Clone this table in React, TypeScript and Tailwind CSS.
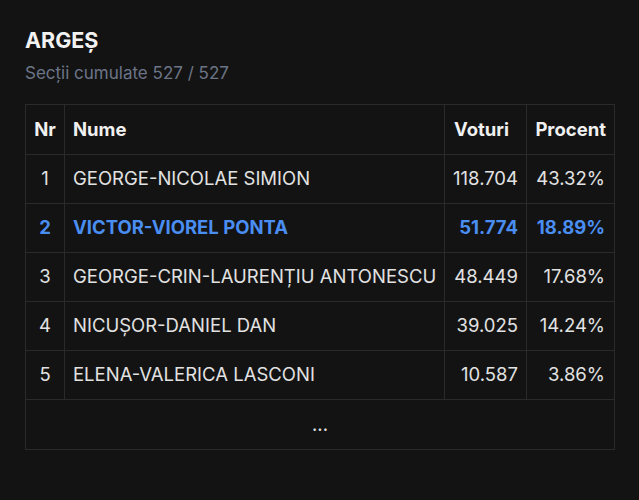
const rows = [
  { nr: 1, name: "GEORGE-NICOLAE SIMION", votes: "118.704", pct: "43.32%" },
  { nr: 2, name: "VICTOR-VIOREL PONTA", votes: "51.774", pct: "18.89%", hl: true },
  { nr: 3, name: "GEORGE-CRIN-LAURENȚIU ANTONESCU", votes: "48.449", pct: "17.68%" },
  { nr: 4, name: "NICUȘOR-DANIEL DAN", votes: "39.025", pct: "14.24%" },
  { nr: 5, name: "ELENA-VALERICA LASCONI", votes: "10.587", pct: "3.86%" },
];

export default function App() {
  return (
    <div
      className="w-[639px] h-[500px] bg-[#131313] px-[25px] pt-[26px]"
      style={{ fontFamily: "Inter, 'Liberation Sans', sans-serif" }}
    >
      <h1 className="text-[21.5px] font-bold text-[#f2f2f2] leading-[28px]">ARGEȘ</h1>
      <p className="text-[17px] text-[#6c7587] mt-[8px] leading-[22px]">Secții cumulate 527 / 527</p>
      <table className="mt-[20px] w-[590px] border-collapse border border-[#2a2a2a] text-[18.5px] text-[#e2e2e2]">
        <thead>
          <tr className="h-[50px] text-[#f0f0f0]">
            <th className="w-[39px] border border-[#2a2a2a] text-center font-bold">Nr</th>
            <th className="border border-[#2a2a2a] text-left pl-[8px] font-bold">Nume</th>
            <th className="w-[82px] border border-[#2a2a2a] text-right pr-[17px] font-bold">Voturi</th>
            <th className="w-[88px] border border-[#2a2a2a] text-right pr-[8px] font-bold">Procent</th>
          </tr>
        </thead>
        <tbody>
          {rows.map((r) => (
            <tr
              key={r.nr}
              className={r.hl ? "h-[49px] text-[#4a8ef2] font-bold" : "h-[49px]"}
            >
              <td className="border border-[#2a2a2a] text-center">{r.nr}</td>
              <td className="border border-[#2a2a2a] pl-[8px] whitespace-nowrap">{r.name}</td>
              <td className="border border-[#2a2a2a] text-right pr-[8px]">{r.votes}</td>
              <td className="border border-[#2a2a2a] text-right pr-[9px]">{r.pct}</td>
            </tr>
          ))}
          <tr className="h-[50px]">
            <td colSpan={4} className="border border-[#2a2a2a] text-center">...</td>
          </tr>
        </tbody>
      </table>
    </div>
  );
}
